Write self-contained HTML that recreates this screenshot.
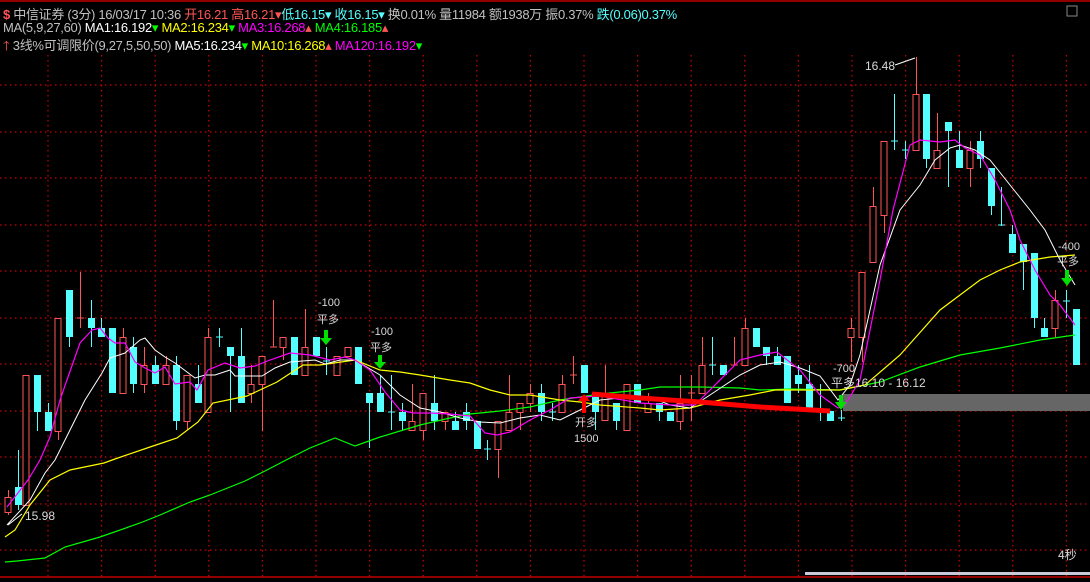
<!DOCTYPE html>
<html><head><meta charset="utf-8"><style>
html,body{margin:0;padding:0;background:#000;width:1090px;height:582px;overflow:hidden}
svg{position:absolute;left:0;top:0}
.hd{position:absolute;left:3px;font:13px "Liberation Sans","Noto Sans CJK SC",sans-serif;color:#c0c0c0;white-space:nowrap;letter-spacing:-0.3px}
.r{color:#ff5454}.c{color:#54ffff}.w{color:#fff}.y{color:#ffff00}.m{color:#ff00ff}.g{color:#00ff00}
</style></head><body>
<svg id="s" width="1090" height="582" xmlns="http://www.w3.org/2000/svg" font-family="Liberation Sans, Noto Sans CJK SC, sans-serif">
<line x1="0" y1="1" x2="1090" y2="1" stroke="#c00000" stroke-width="1.5"/>
<g id="grid" stroke="#d00000" stroke-dasharray="1.5 3.5" stroke-width="1.2"></g>
<line x1="0" y1="577" x2="1090" y2="577" stroke="#c00000" stroke-width="1.5"/>
<rect x="805" y="572" width="285" height="3" fill="#c8c8d8"/>
<rect x="843" y="394" width="247" height="17" fill="#666"/>
<g id="cd"></g>
<polyline fill="none" stroke="#00ff00" stroke-width="1.2" points="5,562 17,561 45,558 65,547 100,537 140,523 160,515 190,502 210,495 245,481 265,471 290,458 310,448 335,438 355,446 380,437 420,425 450,418 470,414 500,411 530,407 560,400 600,394 640,390 660,387 700,387 740,388 760,390 790,389 840,390 880,382 920,367 960,355 1000,348 1040,340 1075,335"/>
<polyline fill="none" stroke="#ffff00" stroke-width="1.2" points="5,537 15,530 30,505 50,480 70,470 104,463 115,459 150,447 177,438 198,422 213,403 247,396 277,382 303,365 320,365 355,360 380,370 400,372 420,375 450,380 470,383 490,390 510,395 530,395 560,400 580,402 600,405 640,408 660,410 690,408 720,400 750,395 775,390 790,390 840,390 865,385 900,355 940,310 980,280 1000,270 1020,262 1050,257 1075,255"/>
<polyline fill="none" stroke="#fff" stroke-width="1" points="7,525 30,500 45,473 55,460 70,430 85,400 102,373 110,358 125,353 140,340 145,338 155,350 165,357 175,363 195,378 205,375 215,375 230,370 235,376 262,376 275,368 290,362 315,360 325,364 340,360 355,360 380,375 400,395 420,408 440,412 460,418 480,422 500,423 520,418 540,415 560,420 580,410 600,400 620,398 650,397 670,405 690,408 710,395 740,375 760,365 780,362 800,368 820,376 838,400 850,385 860,355 880,265 900,210 920,185 935,160 950,148 960,145 975,150 990,160 1010,185 1030,210 1045,230 1060,260 1075,285"/>
<polyline fill="none" stroke="#ff00ff" stroke-width="1.2" points="7,507 28,480 40,460 50,437 60,400 68,377 80,343 92,330 100,328 108,338 115,343 125,343 135,362 145,368 155,373 165,367 175,384 190,382 197,390 208,370 225,363 240,368 255,366 270,360 290,353 310,355 330,360 345,357 355,360 370,370 385,392 400,410 413,413 430,413 450,414 470,416 485,433 497,435 510,432 530,420 550,410 570,398 600,396 640,403 670,405 695,405 710,390 740,360 760,355 777,352 800,370 820,395 838,408 845,405 860,380 880,280 893,210 910,145 920,140 940,142 955,140 965,148 980,155 995,180 1010,210 1020,240 1035,270 1050,295 1060,305 1075,325"/>
<polyline fill="none" stroke="#ff0000" stroke-width="5" points="592,394 640,398 700,402 760,407 830,411"/>
<g fill="#d8d8d8" font-size="11">
<text x="865" y="70" font-size="12">16.48</text><line x1="895" y1="65" x2="915" y2="58" stroke="#fff"/>
<text x="25" y="520" font-size="12">15.98</text><line x1="8" y1="525" x2="22" y2="514" stroke="#fff"/>
<text x="318" y="306">-100</text><text x="317" y="323">平多</text>
<text x="371" y="335">-100</text><text x="370" y="351">平多</text>
<text x="575" y="426">开多</text><text x="574" y="442">1500</text>
<text x="833" y="372">-700</text><text x="831" y="387" font-size="12">平多16.10 - 16.12</text>
<text x="1058" y="250">-400</text><text x="1057" y="265">平多</text>
<text x="1058" y="559" font-size="12">4秒</text>
</g>
<g fill="#00e000">
<path d="M324,330h4v8h4l-6,7l-6,-7h4z"/>
<path d="M378,355h4v7h4l-6,7l-6,-7h4z"/>
<path d="M839,395h4v7h4l-6,8l-6,-8h4z"/>
<path d="M1065,270h4v8h4l-6,8l-6,-8h4z"/>
</g>
<path fill="#ff0000" d="M582,413h4v-12h4l-6,-7l-6,7h4z"/>
<rect x="1067" y="6" width="10" height="10" fill="none" stroke="#888"/>
</svg>
<div class="hd" style="top:4px"><span class="r"><b>$</b></span> 中信证券 (3分) 16/03/17 10:36 <span class="r">开16.21 高16.21</span><span class="r">▾</span><span class="c">低16.15▾ 收16.15▾</span> 换0.01% 量11984 额1938万 振0.37% <span class="c">跌(0.06)0.37%</span></div>
<div class="hd" style="top:20px">MA(5,9,27,60) <span class="w">MA1:16.192</span><span class="g">▾</span> <span class="y">MA2:16.234</span><span class="g">▾</span> <span class="m">MA3:16.268</span><span class="r">▴</span> <span class="g">MA4:16.185</span><span class="r">▴</span></div>
<div class="hd" style="top:35px"><span class="r">🡑</span> 3线%可调限价(9,27,5,50,50) <span class="w">MA5:16.234</span><span class="g">▾</span> <span class="y">MA10:16.268</span><span class="r">▴</span> <span class="m">MA120:16.192</span><span class="g">▾</span></div>
<script>
var NS="http://www.w3.org/2000/svg",g=document.getElementById('grid');
[85,132,178,225,271,318,364,411,457,504,550].forEach(function(y){var l=document.createElementNS(NS,'line');l.setAttribute('x1',0);l.setAttribute('x2',1090);l.setAttribute('y1',y);l.setAttribute('y2',y);g.appendChild(l);});
for(var i=0;i<20;i++){var x=48+53.6*i;var l=document.createElementNS(NS,'line');l.setAttribute('x1',x);l.setAttribute('x2',x);l.setAttribute('y1',55);l.setAttribute('y2',577);g.appendChild(l);}
var C=[[8,497,512,490,515,1],[18,487,505,450,510,0],[26,375,505,375,505,1],[37,375,412,375,431,0],[48,412,431,403,431,0],[58,318,431,318,440,1],[69,290,337,290,347,0],[80,317,319,272,328,1],[91,318,328,300,347,0],[101,328,337,318,337,0],[112,328,393,328,393,0],[123,337,393,328,393,1],[133,347,384,337,393,0],[144,365,384,347,393,1],[155,365,384,356,384,0],[166,365,384,356,384,1],[176,365,421,356,430,0],[187,375,421,375,430,1],[198,384,403,365,403,0],[208,337,412,328,412,1],[219,336,338,328,347,0],[230,347,356,347,412,0],[241,356,403,328,403,0],[251,384,393,365,403,1],[262,356,384,356,431,1],[273,346,348,300,347,1],[283,337,347,337,360,1],[294,337,375,337,375,0],[305,347,375,309,375,1],[316,337,356,337,356,0],[326,360,362,347,375,0],[337,356,375,356,375,1],[348,347,356,347,356,1],[358,347,384,347,384,0],[369,393,403,393,448,0],[380,393,412,375,412,0],[391,411,413,375,430,0],[402,412,421,403,430,0],[412,421,430,384,430,1],[423,393,430,393,440,1],[434,403,421,375,430,0],[445,412,421,412,430,1],[455,421,430,412,430,0],[466,412,421,403,430,0],[477,421,449,421,449,0],[487,448,450,440,460,0],[498,421,449,421,478,1],[509,412,430,375,430,1],[520,403,412,403,430,1],[530,393,403,384,412,1],[541,393,412,384,421,0],[552,411,413,403,421,0],[562,384,412,375,412,1],[573,374,376,356,384,1],[584,365,393,365,393,0],[595,393,412,393,430,0],[605,393,420,365,420,1],[616,403,421,403,430,0],[627,384,430,384,430,1],[637,384,403,384,403,0],[648,403,412,393,412,1],[659,403,412,403,421,0],[670,412,421,412,421,0],[680,403,421,375,430,1],[691,392,394,375,421,1],[702,365,393,337,393,1],[712,364,366,337,375,0],[723,365,375,365,375,0],[734,364,366,337,366,1],[745,328,365,318,365,1],[756,328,347,328,347,0],[766,347,356,347,365,0],[777,356,365,347,365,0],[787,356,403,356,403,0],[798,375,384,365,393,0],[809,384,412,365,412,0],[820,411,413,384,421,0],[830,411,421,411,421,0],[841,417,419,410,421,0],[851,328,337,318,362,1],[862,272,337,272,362,1],[873,206,262,187,262,1],[884,141,215,141,233,1],[894,140,142,94,150,0],[905,149,151,141,159,0],[916,94,150,57,150,1],[926,94,159,94,168,0],[937,150,168,113,168,1],[948,122,131,122,187,0],[959,150,168,131,168,0],[970,150,168,141,187,1],[980,141,159,131,168,0],[991,168,206,168,215,0],[1001,224,226,187,226,0],[1012,234,253,225,253,0],[1023,244,262,244,290,0],[1034,253,318,253,328,0],[1044,328,337,318,337,0],[1055,300,328,290,337,1],[1066,300,302,290,318,0],[1076,309,365,309,365,0]];
var cd=document.getElementById('cd');
C.forEach(function(c){var col=c[5]?'#ff5454':'#54ffff';var x=c[0];
var w=document.createElementNS(NS,'line');w.setAttribute('x1',x+0.5);w.setAttribute('x2',x+0.5);w.setAttribute('y1',c[3]);w.setAttribute('y2',c[4]);w.setAttribute('stroke',col);cd.appendChild(w);
var h=Math.max(c[2]-c[1],1);var r=document.createElementNS(NS,'rect');
if(c[2]-c[1]<=2){r.setAttribute('x',x-3);r.setAttribute('y',c[1]+0.5);r.setAttribute('width',7);r.setAttribute('height',1);r.setAttribute('fill',col);}
else if(c[5]){r.setAttribute('x',x-3);r.setAttribute('y',c[1]+0.5);r.setAttribute('width',6);r.setAttribute('height',h);r.setAttribute('fill','#000');r.setAttribute('stroke',col);}
else{r.setAttribute('x',x-3);r.setAttribute('y',c[1]);r.setAttribute('width',7);r.setAttribute('height',h);r.setAttribute('fill',col);}
cd.appendChild(r);});
</script>
</body></html>
